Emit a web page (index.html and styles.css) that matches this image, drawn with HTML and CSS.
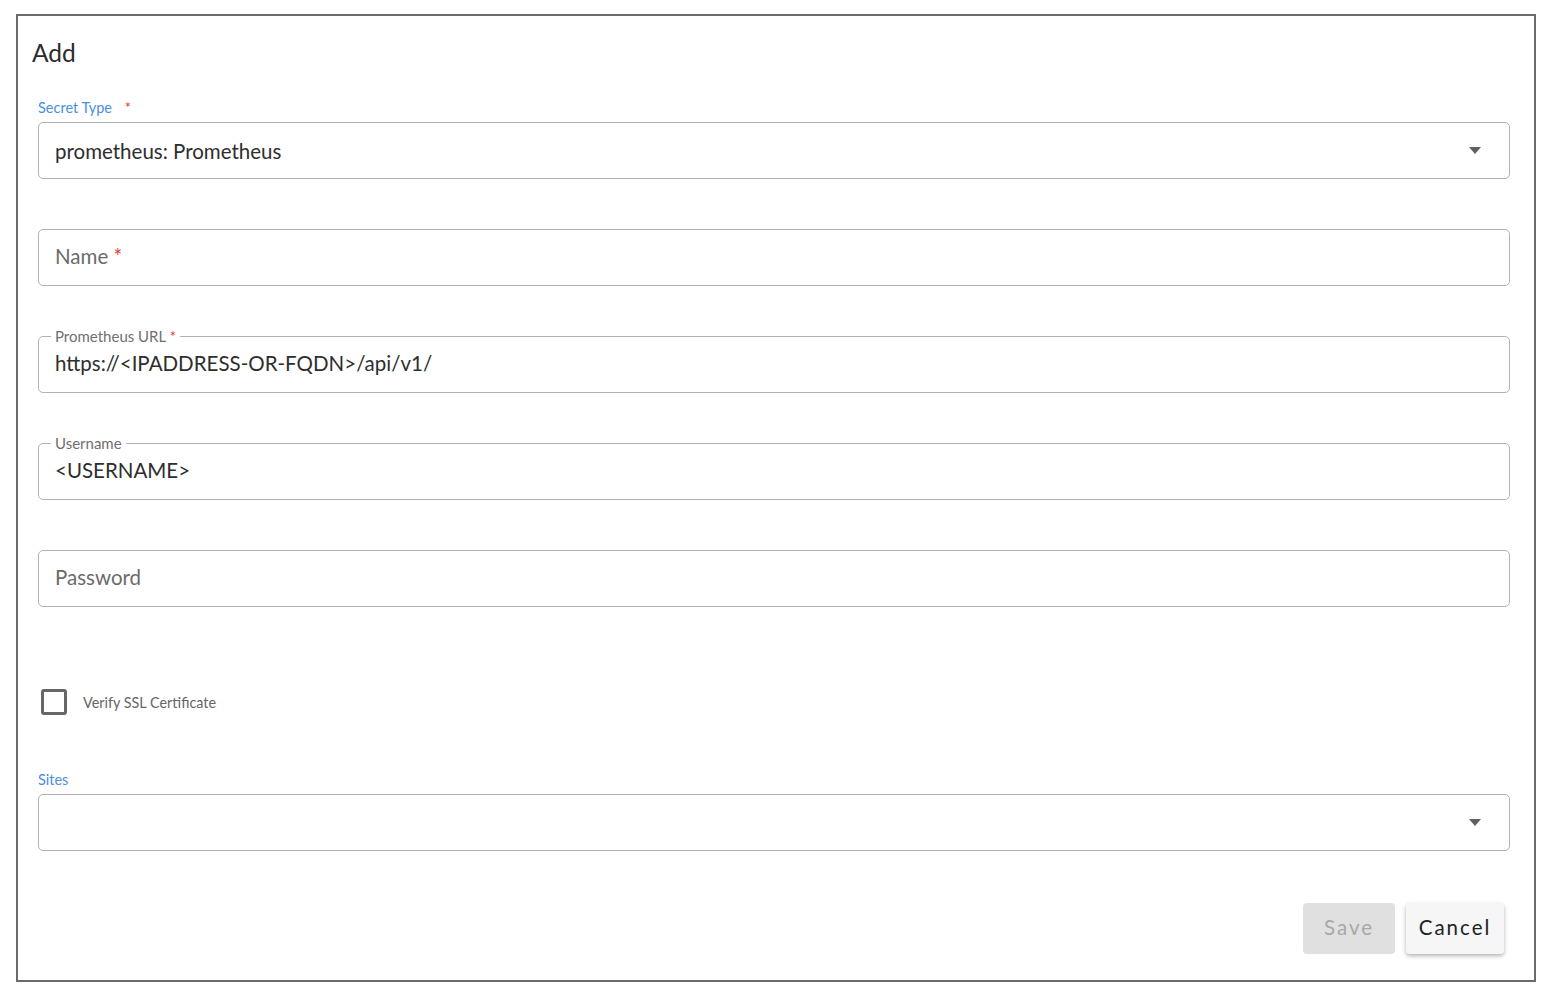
FILE: index.html
```html
<!DOCTYPE html>
<html lang="en">
<head>
<meta charset="utf-8">
<title>Add</title>
<link rel="stylesheet" href="styles.css">
</head>
<body>
<div class="dialog">
  <h1 class="title">Add</h1>

  <div class="top-label">Secret Type <span class="req req-gap">*</span></div>
  <div class="field select">
    <span class="value">prometheus: Prometheus</span>
    <span class="arrow"></span>
  </div>

  <div class="field gap">
    <span class="placeholder">Name <span class="req">*</span></span>
  </div>

  <div class="field gap outlined">
    <span class="float-label">Prometheus URL <span class="req">*</span></span>
    <span class="value">https://&lt;IPADDRESS-OR-FQDN&gt;/api/v1/</span>
  </div>

  <div class="field gap outlined">
    <span class="float-label">Username</span>
    <span class="value">&lt;USERNAME&gt;</span>
  </div>

  <div class="field gap">
    <span class="placeholder">Password</span>
  </div>

  <div class="check-row">
    <span class="checkbox"></span>
    <span class="check-label">Verify SSL Certificate</span>
  </div>

  <div class="top-label sites-label">Sites</div>
  <div class="field select">
    <span class="value"></span>
    <span class="arrow"></span>
  </div>

  <div class="actions">
    <button class="btn btn-save" disabled>Save</button>
    <button class="btn btn-cancel">Cancel</button>
  </div>
</div>
</body>
</html>
```

FILE: styles.css
```css
* { box-sizing: border-box; }

html, body {
  margin: 0;
  padding: 0;
  background: #ffffff;
}

body {
  font-family: "Lato", "Noto Sans", sans-serif;
  color: #333333;
}

.dialog {
  margin: 14px 0 0 16px;
  width: 1520px;
  height: 968px;
  border: 2px solid #6b6b6b;
  padding: 21px 24px 0 20px;
  display: flex;
  flex-direction: column;
}

.title {
  margin: 0 0 0 -6px;
  font-size: 24.5px;
  line-height: 32px;
  font-weight: 400;
  color: #2b2b2b;
}

.top-label {
  margin-top: 29px;
  font-size: 14.5px;
  line-height: 20px;
  color: #4a8fe0;
}

.sites-label {
  margin-top: 48px;
}

.req {
  color: #e53935;
}

.req-gap {
  margin-left: 9px;
}

.field {
  position: relative;
  margin-top: 4px;
  height: 57px;
  border: 1px solid #b3b3b3;
  border-radius: 5px;
  padding: 0 16px 4px 16px;
  display: flex;
  align-items: center;
  font-size: 20.5px;
}

.field.gap {
  margin-top: 50px;
}

.field.select {
  padding-bottom: 0;
}

.value {
  color: #2e2e2e;
  flex: 1;
}

.placeholder {
  color: #6b6b6b;
  flex: 1;
}

.float-label {
  position: absolute;
  left: 12px;
  top: -10px;
  padding: 0 4px;
  background: #ffffff;
  font-size: 15px;
  line-height: 18px;
  color: #707070;
}

.arrow {
  width: 0;
  height: 0;
  border-left: 6px solid transparent;
  border-right: 6px solid transparent;
  border-top: 7px solid #5f5f5f;
  margin-right: 12px;
}

.check-row {
  margin-top: 75px;
  height: 40px;
  display: flex;
  align-items: center;
  padding-left: 3px;
}

.checkbox {
  width: 26px;
  height: 26px;
  border: 3px solid #666666;
  border-radius: 3px;
}

.check-label {
  margin-left: 16px;
  font-size: 14.4px;
  color: #666666;
}

.actions {
  margin-top: 52px;
  display: flex;
  justify-content: flex-end;
  gap: 11px;
  padding-right: 6px;
}

.btn {
  height: 51px;
  border: none;
  border-radius: 4px;
  font-family: "Lato", "Noto Sans", sans-serif;
  font-size: 20.5px;
  letter-spacing: 2px;
  padding: 0 0 4px 0;
}

.btn-save {
  width: 92px;
  background: #e0e0e0;
  color: #a8a8a8;
}

.btn-cancel {
  width: 98px;
  background: #f6f6f6;
  color: #222222;
  box-shadow: 0 2px 4px rgba(0, 0, 0, 0.3);
}
```
